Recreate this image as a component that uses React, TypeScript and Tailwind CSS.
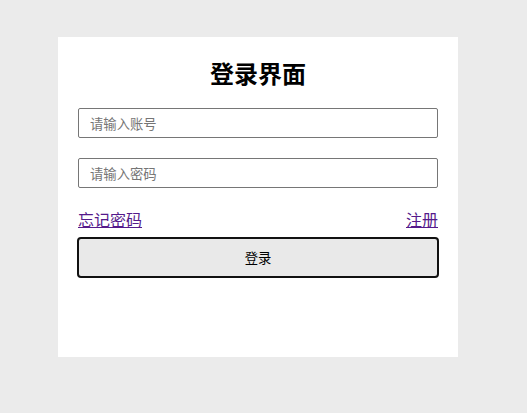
import React, { useState } from 'react';

const fontStack = "font-['Microsoft_YaHei','Noto_Sans_CJK_SC',sans-serif]";

const LoginForm: React.FC = () => {
    const [account, setAccount] = useState('');
    const [password, setPassword] = useState('');

    return (
        <div className={`flex h-[320px] w-[400px] flex-col bg-white px-5 pt-5 ${fontStack}`}>
            <h2 className="h-8 text-center text-2xl leading-8 font-bold text-black">登录界面</h2>

            <input
                type="text"
                value={account}
                onChange={(e) => setAccount(e.target.value)}
                placeholder="请输入账号"
                className="mt-[19px] h-[30px] w-full rounded-[2px] border border-[#767676] px-[11px] text-[13.33px] outline-none placeholder:text-[#757575]"
            />
            <input
                type="password"
                value={password}
                onChange={(e) => setPassword(e.target.value)}
                placeholder="请输入密码"
                className="mt-5 h-[30px] w-full rounded-[2px] border border-[#767676] px-[11px] text-[13.33px] outline-none placeholder:text-[#757575]"
            />

            <div className="mt-[19px] flex h-6 items-center justify-between text-base leading-6">
                <a href="#" className="text-[#551a8b] underline">忘记密码</a>
                <a href="#" className="text-[#551a8b] underline">注册</a>
            </div>

            <button
                type="button"
                className="-mx-px mt-[6px] h-[41px] rounded-[4px] border-2 border-[#111] bg-[#e9e9e9] text-[13.33px] text-black"
            >
                登录
            </button>
        </div>
    );
};

export default function App() {
    return (
        <div className="min-h-[413px] w-full bg-[#ebebeb] pt-[37px] pl-[58px]">
            <LoginForm />
        </div>
    );
}
